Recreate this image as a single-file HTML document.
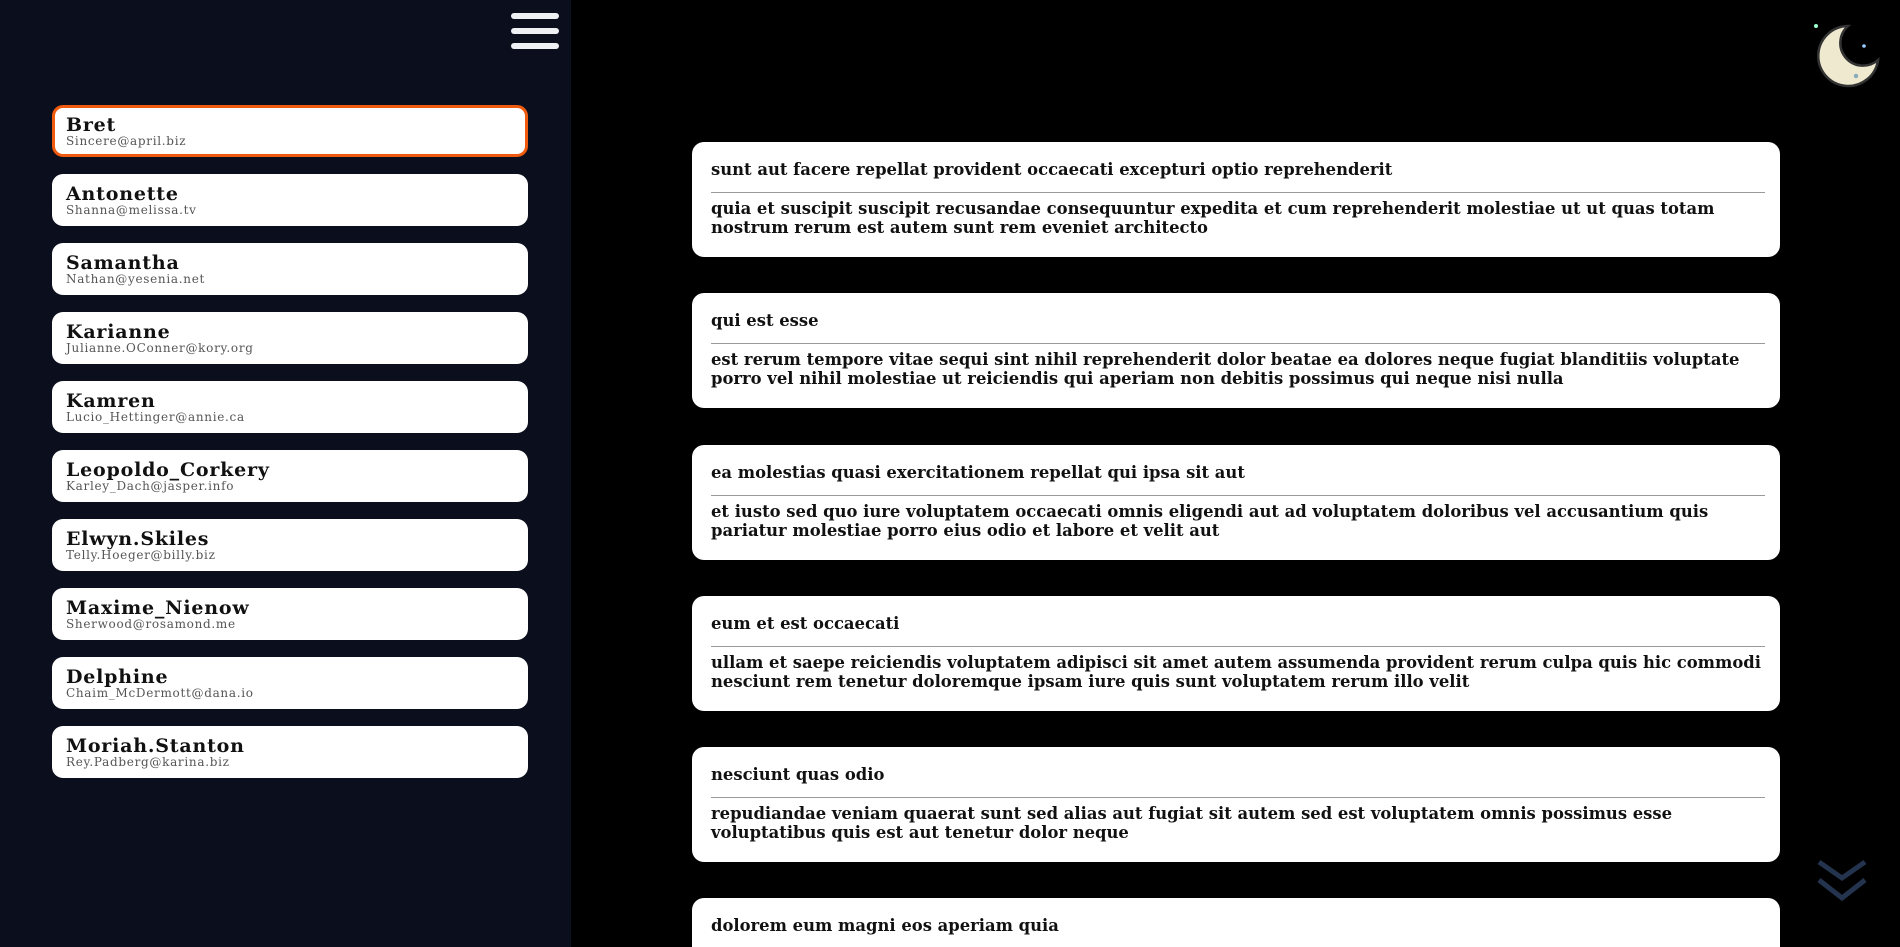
<!DOCTYPE html>
<html><head><meta charset="utf-8"><style>
*{margin:0;padding:0;box-sizing:border-box}
html,body{width:1900px;height:947px;overflow:hidden}
body{background:#000;font-family:"DejaVu Serif","Liberation Serif",serif;position:relative}
.side{position:absolute;left:0;top:0;width:571px;height:947px;background:#0b0e1c}
.bar{position:absolute;left:511px;width:48px;height:6px;background:#eef0f4;border-radius:3px}
.u{position:absolute;left:52px;width:476px;height:52px;background:#fff;border-radius:11px;padding:10px 0 0 14px}
.u.sel{border:3px solid #f05a0e;padding:7px 0 0 11px}
.u b{display:block;font-size:19px;letter-spacing:.8px;color:#111;line-height:20px}
.u i{display:block;font-style:normal;font-size:12px;letter-spacing:.7px;color:#555;line-height:13px}
.p{position:absolute;left:692px;width:1088px;height:115px;background:#fff;border-radius:12px;padding:0 19px;overflow:hidden}
.p h3{font-size:16.4px;font-weight:bold;color:#111;height:50px;line-height:20px;padding-top:18px}
.p hr{border:0;border-top:1.5px solid #9a9a9a;margin:0 -4px 0 0}
.p p{font-size:16.4px;font-weight:bold;color:#111;line-height:19px;padding-top:6px}
</style></head><body>
<div class="side">
<div class="bar" style="top:13px"></div><div class="bar" style="top:28px"></div><div class="bar" style="top:43px"></div>
<div class="u sel" style="top:105px"><b>Bret</b><i>Sincere@april.biz</i></div>
<div class="u" style="top:174px"><b>Antonette</b><i>Shanna@melissa.tv</i></div>
<div class="u" style="top:243px"><b>Samantha</b><i>Nathan@yesenia.net</i></div>
<div class="u" style="top:312px"><b>Karianne</b><i>Julianne.OConner@kory.org</i></div>
<div class="u" style="top:381px"><b>Kamren</b><i>Lucio_Hettinger@annie.ca</i></div>
<div class="u" style="top:450px"><b>Leopoldo_Corkery</b><i>Karley_Dach@jasper.info</i></div>
<div class="u" style="top:519px"><b>Elwyn.Skiles</b><i>Telly.Hoeger@billy.biz</i></div>
<div class="u" style="top:588px"><b>Maxime_Nienow</b><i>Sherwood@rosamond.me</i></div>
<div class="u" style="top:657px"><b>Delphine</b><i>Chaim_McDermott@dana.io</i></div>
<div class="u" style="top:726px"><b>Moriah.Stanton</b><i>Rey.Padberg@karina.biz</i></div>
</div>
<div class="p" style="top:142px"><h3>sunt aut facere repellat provident occaecati excepturi optio reprehenderit</h3><hr><p>quia et suscipit suscipit recusandae consequuntur expedita et cum reprehenderit molestiae ut ut quas totam nostrum rerum est autem sunt rem eveniet architecto</p></div>
<div class="p" style="top:293px"><h3>qui est esse</h3><hr><p>est rerum tempore vitae sequi sint nihil reprehenderit dolor beatae ea dolores neque fugiat blanditiis voluptate porro vel nihil molestiae ut reiciendis qui aperiam non debitis possimus qui neque nisi nulla</p></div>
<div class="p" style="top:445px"><h3>ea molestias quasi exercitationem repellat qui ipsa sit aut</h3><hr><p>et iusto sed quo iure voluptatem occaecati omnis eligendi aut ad voluptatem doloribus vel accusantium quis pariatur molestiae porro eius odio et labore et velit aut</p></div>
<div class="p" style="top:596px"><h3>eum et est occaecati</h3><hr><p>ullam et saepe reiciendis voluptatem adipisci sit amet autem assumenda provident rerum culpa quis hic commodi nesciunt rem tenetur doloremque ipsam iure quis sunt voluptatem rerum illo velit</p></div>
<div class="p" style="top:747px"><h3>nesciunt quas odio</h3><hr><p>repudiandae veniam quaerat sunt sed alias aut fugiat sit autem sed est voluptatem omnis possimus esse voluptatibus quis est aut tenetur dolor neque</p></div>
<div class="p" style="top:898px;height:49px;border-radius:12px 12px 0 0"><h3>dolorem eum magni eos aperiam quia</h3><hr></div>
<svg style="position:absolute;left:1812px;top:20px" width="70" height="70" viewBox="0 0 70 70">
<path d="M36 6 A30 30 0 1 0 66 40 A22 22 0 0 1 36 6 Z" fill="#efe9cf" stroke="#333" stroke-width="2.5"/>
<circle cx="4" cy="6" r="2" fill="#9fc"/><circle cx="52" cy="26" r="1.8" fill="#9cf"/><circle cx="44" cy="56" r="2.2" fill="#8ab"/>
</svg>
<svg style="position:absolute;left:1816px;top:858px" width="52" height="48" viewBox="0 0 52 48">
<path d="M3 4 L26 20 L49 4 M3 22 L26 40 L49 22" fill="none" stroke="#24344e" stroke-width="5"/>
</svg>
</body></html>
